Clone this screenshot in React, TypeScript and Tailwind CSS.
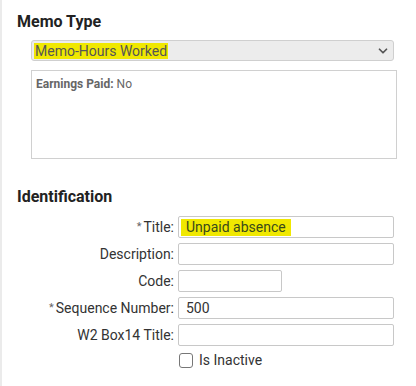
import { ChevronDown } from 'lucide-react';

const rows = [
  { label: 'Title', required: true, value: 'Unpaid absence', highlight: true, width: 'w-[216px]' },
  { label: 'Description', required: false, value: '', width: 'w-[216px]' },
  { label: 'Code', required: false, value: '', width: 'w-[104px]' },
  { label: 'Sequence Number', required: true, value: '500', width: 'w-[216px]' },
  { label: 'W2 Box14 Title', required: false, value: '', width: 'w-[216px]' },
];

export default function App() {
  return (
    <div className="w-[416px] h-[386px] bg-white overflow-hidden border-l-2 border-[#ebebeb] font-['Roboto',sans-serif] text-[#333]">
      <div className="pl-[15px] pt-[12px]">
        <h2 className="text-[16px] font-bold text-[#222] leading-[19px]">Memo Type</h2>

        <div className="ml-[14px] mt-[9px] w-[363px] h-[21px] bg-[#ececec] border border-[#cfcfcf] rounded-[3px] flex items-center pl-[2px] pr-[3px]">
          <span className="bg-[#f0e800] text-[#555] text-[14px] leading-[16px] px-[1px]">Memo-Hours Worked</span>
          <ChevronDown className="ml-auto w-[14px] h-[14px] text-[#555]" strokeWidth={3} />
        </div>

        <div className="ml-[14px] mt-[9px] w-[366px] h-[89px] border border-[#d0d0d0] px-[4px] py-[4px] text-[12px] text-[#666]">
          <span className="font-bold">Earnings Paid:</span> No
        </div>

        <h2 className="mt-[28px] text-[16px] font-bold text-[#222] leading-[19px]">Identification</h2>

        <div className="mt-[10px] flex flex-col gap-[5px]">
          {rows.map((r) => (
            <div key={r.label} className="flex items-center">
              <label className="w-[161px] pr-[4px] text-right text-[14px] leading-[16px] text-[#333]">
                {r.required && <span className="text-[#666] text-[11px] align-top mr-[2px]">*</span>}
                {r.label}:
              </label>
              <div className={`${r.width} h-[22px] border border-[#c8c8c8] rounded-[2px] flex items-center px-[2px] text-[14px]`}>
                {r.value && (
                  <span className={`${r.highlight ? 'bg-[#f0e800] text-[#3a4a1a]' : 'text-[#333]'} px-[5px] leading-[17px]`}>
                    {r.value}
                  </span>
                )}
              </div>
            </div>
          ))}
          <div className="flex items-center pl-[162px] pt-[1px]">
            <span className="w-[14px] h-[15px] border border-[#777] rounded-[3px]" />
            <span className="ml-[6px] text-[14px] text-[#333] leading-[16px]">Is Inactive</span>
          </div>
        </div>
      </div>
    </div>
  );
}
